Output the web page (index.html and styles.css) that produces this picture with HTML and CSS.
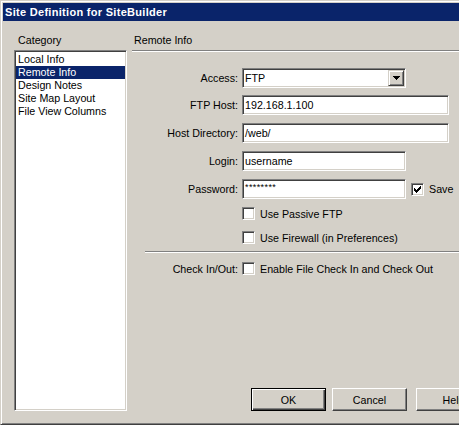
FILE: index.html
```html
<!DOCTYPE html>
<html>
<head>
<meta charset="utf-8">
<link rel="stylesheet" href="styles.css">
</head>
<body>
<div class="window">
  <div class="titlebar">Site Definition for SiteBuilder</div>
  <div class="main">
    <div class="left">
      <div class="cat-label">Category</div>
      <ul class="list">
        <li>Local Info</li>
        <li class="sel">Remote Info</li>
        <li>Design Notes</li>
        <li>Site Map Layout</li>
        <li>File View Columns</li>
      </ul>
    </div>
    <div class="right">
      <div class="panel-title">Remote Info</div>
      <div class="etch"></div>
      <div class="row first">
        <div class="lbl">Access:</div>
        <div class="select">
          <span class="sel-text">FTP</span>
          <span class="dd"><svg width="7" height="4" viewBox="0 0 7 4" shape-rendering="crispEdges"><rect x="0" y="0" width="7" height="1"/><rect x="1" y="1" width="5" height="1"/><rect x="2" y="2" width="3" height="1"/><rect x="3" y="3" width="1" height="1"/></svg></span>
        </div>
      </div>
      <div class="row second">
        <div class="lbl">FTP Host:</div>
        <div class="field wide">192.168.1.100</div>
      </div>
      <div class="row">
        <div class="lbl">Host Directory:</div>
        <div class="field wide">/web/</div>
      </div>
      <div class="row">
        <div class="lbl">Login:</div>
        <div class="field narrow">username</div>
      </div>
      <div class="row">
        <div class="lbl">Password:</div>
        <div class="field narrow pw">********</div>
        <span class="cb save"><svg width="7" height="7" viewBox="0 0 7 7" shape-rendering="crispEdges"><rect x="6" y="0" width="1" height="1"/><rect x="5" y="1" width="2" height="1"/><rect x="0" y="2" width="1" height="1"/><rect x="4" y="2" width="3" height="1"/><rect x="0" y="3" width="2" height="1"/><rect x="3" y="3" width="3" height="1"/><rect x="0" y="4" width="5" height="1"/><rect x="1" y="5" width="3" height="1"/><rect x="2" y="6" width="1" height="1"/></svg></span>
        <span class="save-text">Save</span>
      </div>
      <div class="check-row passive">
        <span class="cb"></span><span class="cb-text">Use Passive FTP</span>
      </div>
      <div class="check-row firewall">
        <span class="cb"></span><span class="cb-text">Use Firewall (in Preferences)</span>
      </div>
      <div class="etch sep"></div>
      <div class="check-row checkin">
        <div class="lbl">Check In/Out:</div>
        <span class="cb"></span><span class="cb-text">Enable File Check In and Check Out</span>
      </div>
      <div class="buttons">
        <div class="btn default">OK</div>
        <div class="btn cancel">Cancel</div>
        <div class="btn help">Help</div>
      </div>
    </div>
  </div>
</div>
</body>
</html>
```
FILE: styles.css
```css
html, body {
  margin: 0;
  padding: 0;
  background: #d4d0c8;
  overflow: hidden;
}
body {
  width: 459px;
  height: 425px;
  font-family: "Liberation Sans", Arial, sans-serif;
  font-size: 10.7px;
  color: #000;
}
.window {
  width: 520px;
  height: 425px;
  box-sizing: border-box;
  border: 1px solid;
  border-color: #d4d0c8 #404040 #404040 #d4d0c8;
  box-shadow: inset 1px 1px #fff, inset -1px -1px #808080;
  padding: 2px;
  display: flex;
  flex-direction: column;
  background: #d4d0c8;
}
.titlebar {
  height: 18px;
  line-height: 18px;
  background: #0a246a;
  color: #fff;
  font-size: 11px;
  font-weight: bold;
  letter-spacing: 0.3px;
  padding-left: 2px;
  white-space: nowrap;
}
.main {
  flex: 1;
  display: flex;
  padding: 13px 0 0 11px;
}
.left {
  width: 113px;
  display: flex;
  flex-direction: column;
}
.cat-label {
  line-height: 13px;
  height: 13px;
  padding-left: 4px;
}
.list {
  list-style: none;
  margin: 3px 0 0 0;
  padding: 1px;
  width: 113px;
  height: 361px;
  box-sizing: border-box;
  background: #fff;
  border: 1px solid;
  border-color: #808080 #fff #fff #808080;
  box-shadow: inset 1px 1px #404040, inset -1px -1px #d4d0c8;
}
.list li {
  height: 13px;
  line-height: 13px;
  padding-left: 2px;
  white-space: nowrap;
}
.list li:first-child { margin-top: 1px; }
.list li.sel {
  background: #0a246a;
  color: #fff;
}
.right {
  flex: 1;
  margin-left: 5px;
  display: flex;
  flex-direction: column;
}
.panel-title {
  line-height: 13px;
  height: 13px;
  padding-left: 2px;
}
.etch {
  margin-top: 3px;
  height: 0;
  border-top: 1px solid #808080;
  border-bottom: 1px solid #fff;
}
.row {
  display: flex;
  align-items: center;
  height: 20px;
  margin-top: 8px;
}
.row.first { margin-top: 16px; }
.row.second { margin-top: 7px; }
.lbl {
  width: 106px;
  margin-right: 4px;
  text-align: right;
  white-space: nowrap;
  flex: none;
}
.field {
  box-sizing: border-box;
  height: 20px;
  line-height: 16px;
  padding: 1px 2px;
  background: #fff;
  border: 1px solid;
  border-color: #808080 #fff #fff #808080;
  box-shadow: inset 1px 1px #404040, inset -1px -1px #d4d0c8;
  white-space: nowrap;
}
.field.wide { width: 207px; }
.field.narrow { width: 164px; }
.field.pw {
  font-size: 9px;
  letter-spacing: 0.4px;
  line-height: 12px;
}
.select {
  box-sizing: border-box;
  width: 164px;
  height: 20px;
  padding: 1px;
  display: flex;
  align-items: center;
  background: #fff;
  border: 1px solid;
  border-color: #808080 #fff #fff #808080;
  box-shadow: inset 1px 1px #404040, inset -1px -1px #d4d0c8;
}
.sel-text {
  flex: 1;
  padding-left: 1px;
  line-height: 16px;
}
.dd {
  width: 16px;
  height: 16px;
  box-sizing: border-box;
  background: #d4d0c8;
  border: 1px solid;
  border-color: #d4d0c8 #404040 #404040 #d4d0c8;
  box-shadow: inset 1px 1px #fff, inset -1px -1px #808080;
  display: flex;
  align-items: center;
  justify-content: center;
}
.dd svg { display: block; fill: #000; }
.cb {
  width: 13px;
  height: 13px;
  box-sizing: border-box;
  flex: none;
  background: #fff;
  border: 1px solid;
  border-color: #808080 #fff #fff #808080;
  box-shadow: inset 1px 1px #404040, inset -1px -1px #d4d0c8;
  display: flex;
  align-items: center;
  justify-content: center;
}
.cb svg { display: block; fill: #000; }
.save { margin-left: 5px; }
.save-text { margin-left: 5px; }
.check-row {
  display: flex;
  align-items: center;
  height: 13px;
  padding-left: 110px;
}
.check-row.passive { margin-top: 8px; }
.check-row.firewall { margin-top: 11px; }
.check-row.checkin { margin-top: 9px; padding-left: 0; }
.cb-text {
  margin-left: 5px;
  white-space: nowrap;
}
.sep {
  margin-top: 7px;
  margin-left: 13px;
}
.buttons {
  margin-top: auto;
  margin-bottom: 11px;
  padding-left: 119px;
  display: flex;
}
.btn {
  width: 75px;
  height: 23px;
  box-sizing: border-box;
  display: flex;
  align-items: center;
  justify-content: center;
  border: 1px solid;
  border-color: #fff #404040 #404040 #fff;
  box-shadow: inset -1px -1px #808080;
  background: #d4d0c8;
  flex: none;
}
.btn.default {
  border-color: #000;
  box-shadow: inset 1px 1px #fff, inset -1px -1px #404040, inset -2px -2px #808080;
}
.btn.cancel { margin-left: 6px; }
.btn.help { margin-left: 9px; }
```
